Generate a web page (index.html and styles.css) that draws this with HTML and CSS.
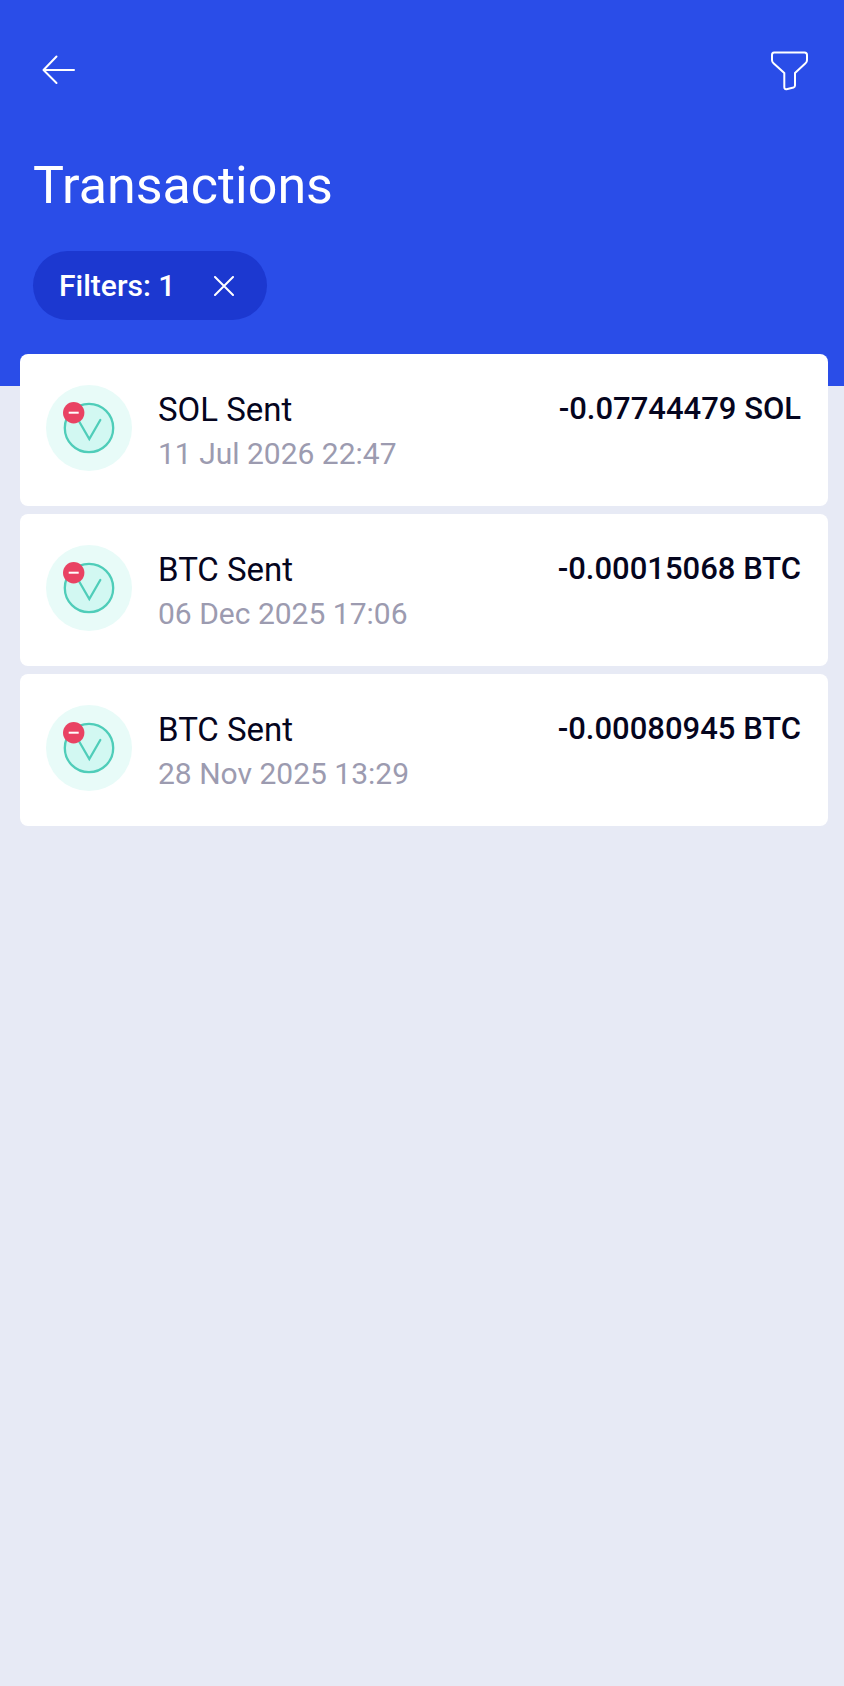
FILE: index.html
```
<!DOCTYPE html>
<html lang="en">
<head>
    <meta charset="UTF-8">
    <meta name="viewport" content="width=device-width, initial-scale=1.0">
    <title>Transactions</title>
    <link rel="stylesheet" href="styles.css">
</head>
<body>
    <!-- Shared icon for the list rows -->
    <svg class="sprite" width="0" height="0" aria-hidden="true">
        <symbol id="sent" viewBox="0 0 86 86">
            <circle cx="43" cy="43" r="43" fill="#e8fbf8"/>
            <circle cx="43" cy="43" r="24.2" fill="#d2f8f2" stroke="#4fcdb9" stroke-width="2.3"/>
            <path d="M32 34.5l11.3 19.5 11-19" fill="none" stroke="#4fcdb9" stroke-width="2.3" stroke-linecap="round"/>
            <circle cx="27.7" cy="27.7" r="10.7" fill="#e94263"/>
            <path d="M22.7 27.7h10" stroke="#fff" stroke-width="2"/>
        </symbol>
    </svg>

    <header class="header">
        <div class="toolbar">
            <button class="icon-button" aria-label="Back">
                <svg width="50" height="50" viewBox="0 0 50 50">
                    <path d="M41 25H10.5M23.5 11.5L10.5 25l13 13"/>
                </svg>
            </button>
            <button class="icon-button" aria-label="Filter">
                <svg width="50" height="50" viewBox="0 0 50 50">
                    <path d="M10 7.5H40.5Q43 7.5 43 10V15Q43 17 41.5 18.3L31 28V40.5Q31 42 29.5 42.5L22.5 44.2Q20.3 44.5 20.3 42V28L9.5 18.3Q8 17 8 15V10Q8 7.5 10 7.5Z"/>
                </svg>
            </button>
        </div>
        <h1 class="title">Transactions</h1>
        <button class="chip">
            <span>Filters: 1</span>
            <svg width="20" height="20" viewBox="0 0 20 20">
                <path d="M1 1l18 18M19 1L1 19"/>
            </svg>
        </button>
    </header>

    <main class="list">
        <article class="card">
            <svg class="card-icon" width="86" height="86"><use href="#sent"/></svg>
            <div class="info">
                <div class="name">SOL Sent</div>
                <div class="date">11 Jul 2026 22:47</div>
            </div>
            <div class="amount">-0.07744479 SOL</div>
        </article>
        <article class="card">
            <svg class="card-icon" width="86" height="86"><use href="#sent"/></svg>
            <div class="info">
                <div class="name">BTC Sent</div>
                <div class="date">06 Dec 2025 17:06</div>
            </div>
            <div class="amount">-0.00015068 BTC</div>
        </article>
        <article class="card">
            <svg class="card-icon" width="86" height="86"><use href="#sent"/></svg>
            <div class="info">
                <div class="name">BTC Sent</div>
                <div class="date">28 Nov 2025 13:29</div>
            </div>
            <div class="amount">-0.00080945 BTC</div>
        </article>
    </main>
</body>
</html>
```

FILE: styles.css
```
* {
    box-sizing: border-box;
}

body {
    margin: 0;
    background: #e7eaf5;
    color: #05051e;
    font-family: Roboto, sans-serif;
}

.sprite {
    position: absolute;
}

.header {
    background: #2a4de8;
    color: white;
    padding: 45px 30px 66px 33px;
}

.toolbar {
    display: flex;
    justify-content: space-between;
}

.icon-button {
    padding: 0;
    border: 0;
    background: none;
    cursor: pointer;
}

.icon-button svg,
.chip svg {
    display: block;
    fill: none;
    stroke: white;
    stroke-width: 2;
    stroke-linecap: round;
    stroke-linejoin: round;
}

.title {
    margin: 61px 0 35px;
    font-size: 52px;
    line-height: 60px;
    font-weight: 400;
}

.chip {
    display: flex;
    align-items: center;
    gap: 39px;
    height: 69px;
    padding: 0 33px 0 26px;
    border: 0;
    border-radius: 35px;
    background: #1c38d0;
    color: white;
    font-family: inherit;
    font-size: 30px;
    font-weight: 500;
    cursor: pointer;
}

/* First card overlaps the blue header */
.list {
    display: flex;
    flex-direction: column;
    gap: 8px;
    margin: -32px 16px 0 20px;
}

.card {
    display: flex;
    align-items: flex-start;
    padding: 31px 27px 30px 26px;
    border-radius: 8px;
    background: white;
}

.card-icon {
    flex-shrink: 0;
}

.info {
    flex: 1;
    padding: 3px 0 0 26px;
}

.name {
    font-size: 33px;
    line-height: 44px;
}

.date {
    color: #9c9bb0;
    font-size: 30px;
    line-height: 44px;
}

.amount {
    padding-top: 2px;
    font-size: 31px;
    line-height: 44px;
    font-weight: 500;
    white-space: nowrap;
}
```
